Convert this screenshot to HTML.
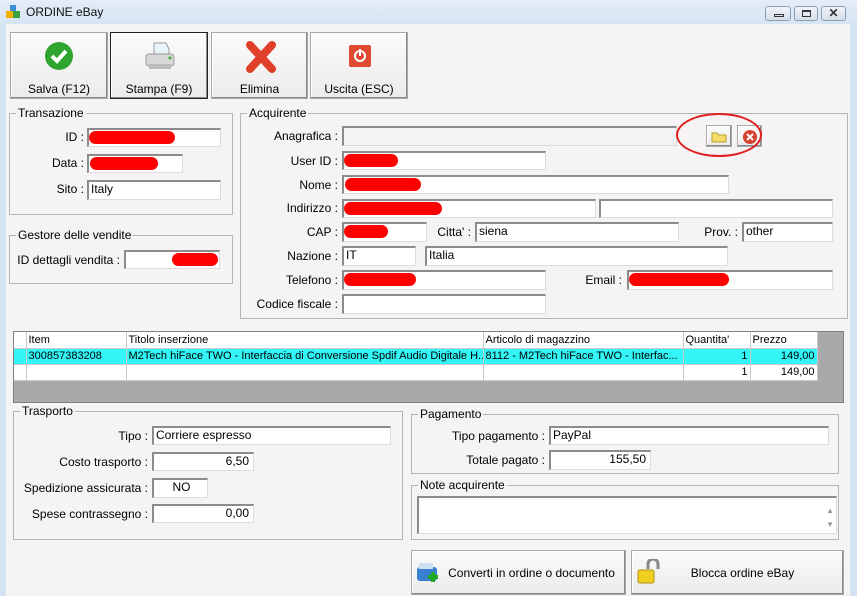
<!DOCTYPE html>
<html><head><meta charset="utf-8"><style>
*{box-sizing:border-box;margin:0;padding:0}
body{width:857px;height:596px;overflow:hidden;font-family:"Liberation Sans",sans-serif;font-size:12px;color:#000;background:#d3e3f4;position:relative}
div{position:absolute}
.win{left:6px;top:24px;width:844px;height:572px;background:#f5f3f4}
.tb{left:0;top:0;width:857px;height:24px;background:linear-gradient(#e4edf8,#d6e4f4)}
.btn{background:linear-gradient(#fbfbfb,#ecebeb);border:1px solid #a9a9a9;box-shadow:inset -1px -1px #8a8a8a,inset 1px 1px #fff;text-align:center}
.grp{border:1px solid #b5b5b5}
.gl{top:-8px;left:6px;background:#f5f3f4;padding:0 2px;line-height:14px}
.in{background:#fff;border:1px solid #dcdcdc;border-top:2px solid #8c8c8c;border-left:2px solid #8c8c8c;padding-left:2px;line-height:15px;white-space:nowrap;overflow:hidden}
.ro{background:#f5f3f4}
.lb{text-align:right;line-height:16px;white-space:nowrap}
.r{text-align:right;padding-right:4px}
.red{background:#f00;border-radius:8px;height:13px;top:1px}
.ctl{top:6px;height:15px;border:1px solid #8f9fb3;border-radius:3px;background:linear-gradient(#f0f4fa,#d5deea)}
table{border-collapse:collapse;font-size:11px;table-layout:fixed;width:803px}
td{border-right:1px solid #c8c8c8;border-bottom:1px solid #c8c8c8;height:16px;padding:0 2px;white-space:nowrap;overflow:hidden;text-overflow:clip}
</style></head><body>
<div class="tb"></div>
<div style="left:6px;top:5px;width:14px;height:14px"><svg width="14" height="14"><rect x="4" y="0" width="6" height="6" fill="#3a8fd0"/><rect x="0" y="6" width="7" height="7" fill="#f0b000"/><rect x="7" y="6" width="7" height="7" fill="#3aa040"/></svg></div>
<div style="left:26px;top:5px;line-height:14px;color:#111">ORDINE eBay</div>
<div class="ctl" style="left:765px;width:26px"><div style="left:8px;top:7px;width:10px;height:3px;border:1px solid #333"></div></div>
<div class="ctl" style="left:794px;width:24px"><div style="left:7px;top:3px;width:9px;height:7px;border:1px solid #333;border-top-width:2px"></div></div>
<div class="ctl" style="left:821px;width:25px;text-align:center;line-height:12px;font-weight:bold;color:#333">✕</div>
<div class="win"></div>

<div class="btn" style="left:10px;top:32px;width:98px;height:67px"><svg style="position:absolute;left:33px;top:8px" width="30" height="30"><circle cx="15" cy="15" r="14" fill="#2ea52e"/><path d="M8 15l5 5 9-10" stroke="#fff" stroke-width="4" fill="none"/></svg><div style="left:0;width:96px;top:49px">Salva (F12)</div></div>
<div class="btn" style="left:110px;top:32px;width:98px;height:67px;border:1px solid #222"><svg style="position:absolute;left:32px;top:8px" width="34" height="30"><path d="M11 2h12l3 6v6H11z" fill="#e8f4fa" stroke="#999"/><rect x="3" y="13" width="28" height="12" rx="3" fill="#d8d8d8" stroke="#999"/><rect x="6" y="23" width="22" height="5" fill="#bbb"/><circle cx="27" cy="17" r="1.5" fill="#3a3"/></svg><div style="left:0;width:96px;top:49px">Stampa (F9)</div></div>
<div class="btn" style="left:211px;top:32px;width:97px;height:67px"><svg style="position:absolute;left:34px;top:8px" width="30" height="32"><path d="M4 4l22 24M26 4L4 28" stroke="#e0402a" stroke-width="8" stroke-linecap="round"/></svg><div style="left:0;width:95px;top:49px">Elimina</div></div>
<div class="btn" style="left:310px;top:32px;width:98px;height:67px"><svg style="position:absolute;left:38px;top:12px" width="22" height="22"><rect width="22" height="22" rx="2" fill="#e04a30"/><circle cx="11" cy="11" r="5" stroke="#fff" stroke-width="2" fill="none"/><path d="M11 4v7" stroke="#fff" stroke-width="2"/></svg><div style="left:0;width:96px;top:49px">Uscita (ESC)</div></div>

<div class="grp" style="left:9px;top:113px;width:224px;height:102px"><div class="gl">Transazione</div></div>
<div class="lb" style="left:20px;width:64px;top:129px">ID :</div><div class="in" style="left:87px;top:128px;width:134px;height:19px"><div class="red" style="left:0;width:86px"></div></div>
<div class="lb" style="left:20px;width:64px;top:155px">Data :</div><div class="in" style="left:87px;top:154px;width:96px;height:19px"><div class="red" style="left:1px;width:68px"></div></div>
<div class="lb" style="left:20px;width:64px;top:181px">Sito :</div><div class="in" style="left:87px;top:180px;width:134px;height:20px">Italy</div>

<div class="grp" style="left:9px;top:235px;width:224px;height:49px"><div class="gl">Gestore delle vendite</div></div>
<div class="lb" style="left:14px;width:106px;top:252px">ID dettagli vendita :</div><div class="in" style="left:124px;top:250px;width:96px;height:19px"><div class="red" style="left:46px;width:46px"></div></div>

<div class="grp" style="left:240px;top:113px;width:608px;height:206px"><div class="gl">Acquirente</div></div>
<div class="lb" style="left:250px;width:88px;top:128px">Anagrafica :</div><div class="in ro" style="left:342px;top:126px;width:335px;height:20px"></div>
<div class="btn" style="left:706px;top:125px;width:26px;height:22px"><svg style="position:absolute;left:4px;top:4px" width="16" height="13"><path d="M1 3h5l2 2h7v7H1z" fill="#f3dc6c" stroke="#b8a030"/></svg></div>
<div class="btn" style="left:737px;top:125px;width:25px;height:22px"><svg style="position:absolute;left:4px;top:3px" width="16" height="16"><circle cx="8" cy="8" r="7" fill="#d84030"/><path d="M5 5l6 6M11 5l-6 6" stroke="#fff" stroke-width="2"/></svg></div>
<div style="left:676px;top:113px;width:86px;height:44px;border:2px solid #e02020;border-radius:50%"></div>
<div class="lb" style="left:250px;width:88px;top:153px">User ID :</div><div class="in" style="left:342px;top:151px;width:204px;height:19px"><div class="red" style="left:0;width:54px"></div></div>
<div class="lb" style="left:250px;width:88px;top:177px">Nome :</div><div class="in" style="left:342px;top:175px;width:387px;height:19px"><div class="red" style="left:1px;width:76px"></div></div>
<div class="lb" style="left:250px;width:88px;top:200px">Indirizzo :</div><div class="in" style="left:342px;top:199px;width:254px;height:19px"><div class="red" style="left:0;width:98px"></div></div><div class="in" style="left:599px;top:199px;width:234px;height:19px"></div>
<div class="lb" style="left:250px;width:88px;top:224px">CAP :</div><div class="in" style="left:342px;top:222px;width:85px;height:20px"><div class="red" style="left:0;width:44px"></div></div>
<div class="lb" style="left:420px;width:51px;top:224px">Citta' :</div><div class="in" style="left:475px;top:222px;width:204px;height:20px">siena</div>
<div class="lb" style="left:680px;width:58px;top:224px">Prov. :</div><div class="in" style="left:742px;top:222px;width:91px;height:20px">other</div>
<div class="lb" style="left:250px;width:88px;top:248px">Nazione :</div><div class="in" style="left:342px;top:246px;width:74px;height:20px">IT</div><div class="in" style="left:425px;top:246px;width:303px;height:20px">Italia</div>
<div class="lb" style="left:250px;width:88px;top:272px">Telefono :</div><div class="in" style="left:342px;top:270px;width:204px;height:20px"><div class="red" style="left:0;width:72px"></div></div>
<div class="lb" style="left:560px;width:62px;top:272px">Email :</div><div class="in" style="left:627px;top:270px;width:206px;height:20px"><div class="red" style="left:0;width:100px"></div></div>
<div class="lb" style="left:250px;width:88px;top:296px">Codice fiscale :</div><div class="in" style="left:342px;top:294px;width:204px;height:20px"></div>

<div style="left:13px;top:331px;width:831px;height:72px;background:#a9a9a9;border:1px solid #808080"></div>
<div style="left:14px;top:332px"><table style="background:#fff">
<colgroup><col style="width:12px"><col style="width:100px"><col style="width:357px"><col style="width:200px"><col style="width:67px"><col style="width:67px"></colgroup>
<tr><td></td><td>Item</td><td>Titolo inserzione</td><td>Articolo di magazzino</td><td>Quantita'</td><td>Prezzo</td></tr>
<tr style="background:#33f5f5"><td></td><td>300857383208</td><td>M2Tech hiFace TWO - Interfaccia di Conversione Spdif Audio Digitale H...</td><td>8112 - M2Tech hiFace TWO - Interfac...</td><td style="text-align:right">1</td><td style="text-align:right">149,00</td></tr>
<tr><td></td><td></td><td></td><td></td><td style="text-align:right">1</td><td style="text-align:right">149,00</td></tr>
</table></div>

<div class="grp" style="left:13px;top:411px;width:390px;height:129px"><div class="gl">Trasporto</div></div>
<div class="lb" style="left:20px;width:128px;top:428px">Tipo :</div><div class="in" style="left:152px;top:426px;width:239px;height:19px">Corriere espresso</div>
<div class="lb" style="left:20px;width:128px;top:454px">Costo trasporto :</div><div class="in r" style="left:152px;top:452px;width:102px;height:19px">6,50</div>
<div class="lb" style="left:20px;width:128px;top:480px">Spedizione assicurata :</div><div class="in" style="left:152px;top:478px;width:56px;height:20px;text-align:center">NO</div>
<div class="lb" style="left:20px;width:128px;top:506px">Spese contrassegno :</div><div class="in r" style="left:152px;top:504px;width:102px;height:19px">0,00</div>

<div class="grp" style="left:411px;top:414px;width:428px;height:60px"><div class="gl">Pagamento</div></div>
<div class="lb" style="left:420px;width:125px;top:428px">Tipo pagamento :</div><div class="in" style="left:549px;top:426px;width:280px;height:19px">PayPal</div>
<div class="lb" style="left:420px;width:125px;top:452px">Totale pagato :</div><div class="in r" style="left:549px;top:450px;width:102px;height:20px">155,50</div>

<div class="grp" style="left:411px;top:485px;width:428px;height:55px"><div class="gl">Note acquirente</div></div>
<div class="in" style="left:417px;top:496px;width:420px;height:38px"><div style="right:2px;top:6px;color:#999;font-size:8px;line-height:14px">▲<br>▼</div></div>

<div class="btn" style="left:411px;top:550px;width:215px;height:45px"><svg style="position:absolute;left:4px;top:10px" width="24" height="24"><rect x="1" y="6" width="20" height="14" rx="3" fill="#3a80d0"/><rect x="3" y="2" width="14" height="6" fill="#cfe0f0"/><path d="M17 11v10M12 16h10" stroke="#2a2" stroke-width="4"/></svg><div style="left:0;width:213px;top:15px;padding-left:26px">Converti in ordine o documento</div></div>
<div class="btn" style="left:631px;top:550px;width:213px;height:45px"><svg style="position:absolute;left:4px;top:8px" width="26" height="26"><path d="M12 10V5a5 5 0 0 1 10 0v5" stroke="#888" stroke-width="3" fill="none"/><rect x="2" y="11" width="16" height="13" rx="2" fill="#f0d020" stroke="#b09010"/></svg><div style="left:0;width:211px;top:15px;padding-left:10px">Blocca ordine eBay</div></div>
</body></html>
